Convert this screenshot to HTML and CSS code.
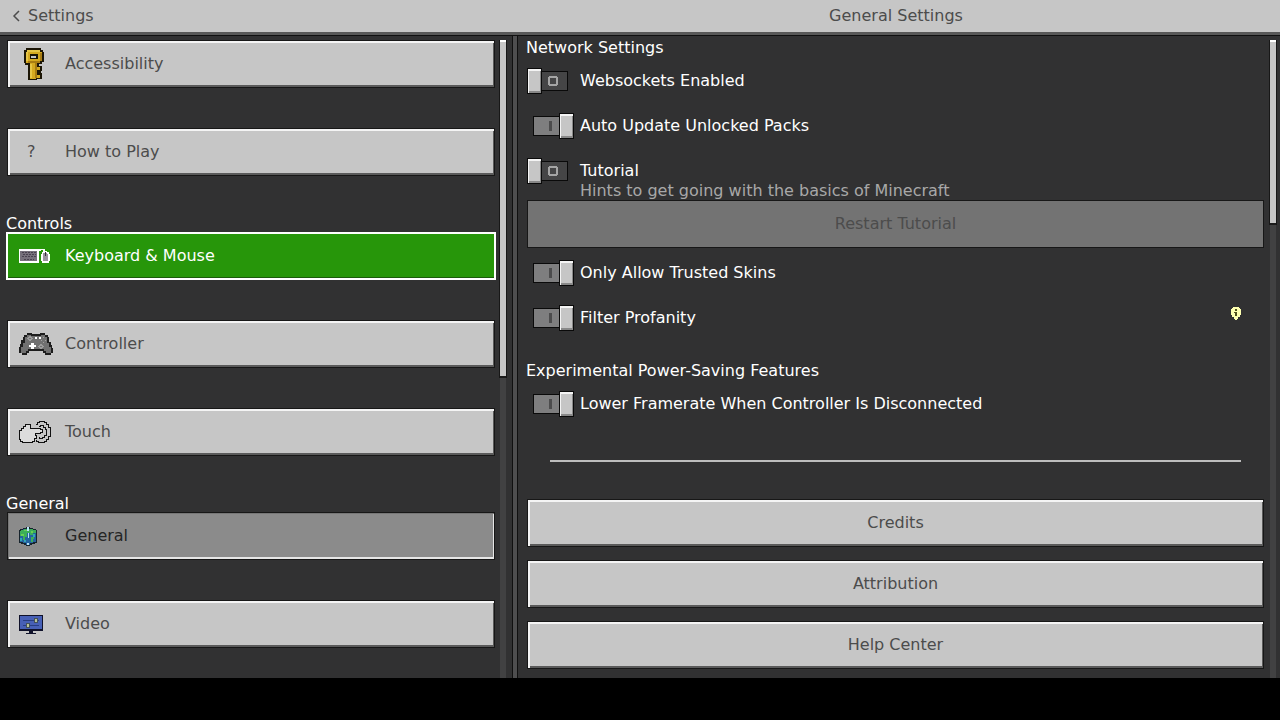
FILE: index.html
```html
<!DOCTYPE html>
<html lang="en">
<head>
    <meta charset="UTF-8">
    <meta name="viewport" content="width=device-width, initial-scale=1.0">
    <title>General Settings</title>
    <link rel="stylesheet" href="styles.css">
</head>
<body>
    <header class="topbar">
        <div class="back-area">
            <button type="button" class="back">
                <svg width="8" height="12" viewBox="0 0 8 12"><path d="M7 1L2 6L7 11" fill="none" stroke="#4c4c4c" stroke-width="1.5"/></svg>
                Settings
            </button>
        </div>
        <h1>General Settings</h1>
    </header>

    <main class="screen">
        <div class="sidebar">
            <nav class="menu">
                <button type="button" class="tile">
                    <svg class="icon" viewBox="0 0 36 32">
                        <path fill="#1c1606" d="M7 0h15v2h2v2h1v10h-2v2h-3v2h3v5h-1v2h1v6h-5v1h-9V17h-3v-2H5V2h2z"/>
                        <path fill="#d5a91f" d="M8 2h13v2h2v9h-2v2h-3v4h3v3h-3v5h3v3h-4v1h-6V15H7V4h1z"/>
                        <path fill="#e6c545" d="M8 2h13v2H9v9H7V4h1zM11 16h2v14h-2z"/>
                        <path fill="#a87c12" d="M21 5h2v8h-2v2H9v-2h12zM16 15h2v15h-2z"/>
                        <path fill="#1c1606" d="M11 6h8v5h-8z"/>
                        <path fill="#c6c6c6" d="M12 8h5v2h-5z"/>
                    </svg>
                    <span>Accessibility</span>
                </button>
                <button type="button" class="tile">
                    <span class="icon question">?</span>
                    <span>How to Play</span>
                </button>

                <section class="group">
                    <h2>Controls</h2>
                    <button type="button" class="tile active">
                        <svg class="icon" viewBox="0 0 36 32">
                            <path fill="#fff" d="M0 9h20v14H0z"/>
                            <path fill="#77717c" d="M1 11h17v10H1z"/>
                            <path stroke="#4a4350" stroke-dasharray="2 1" d="M3 12.500h14M4 14.500h13M3 16.500h14M5 19.500h10"/>
                            <path fill="none" stroke="#fff" stroke-width="1.500" d="M20 10.500h1v-1h4v3"/>
                            <path fill="#fff" d="M24 11h4v1h2v2h1v7h-1v2h-7v-2h-1v-7h1v-2h1z"/>
                            <path fill="#9a929f" d="M24 13h4v1h1v7h-5z"/>
                            <path fill="#38313d" d="M26 12h1v4h-1z"/>
                        </svg>
                        <span>Keyboard &amp; Mouse</span>
                    </button>
                    <button type="button" class="tile">
                        <svg class="icon" viewBox="0 0 36 32">
                            <path fill="#1d1d1d" d="M8 5h5v1h8V5h5v2h3v2h1v5h2v3h1v3h1v5h-2v2h-6v-2h-2v-2H10v2H8v2H3v-2H0v-6h1v-3h1v-4h2V9h1V7h3z"/>
                            <path fill="#707070" d="M8 7h4v1h10V7h4v2h2v6h2v4h2v6h-5v-2h-2v-2H9v2H7v2H2v-6h2v-4h2V9h2z"/>
                            <path fill="#fff" d="M12 15h3v2h2v2h-2v2h-3v-2h-2v-2h2zM16 9h2v2h-2zM20 9h2v2h-2z"/>
                            <path fill="none" stroke="#9c9c9c" d="M9 10.500l2-2 2 2-2 2zM20 18.500l2-2 2 2-2 2z"/>
                            <path fill="#a0a0a0" d="M24 9h1v1h-1zM22 12h1v1h-1zM26 12h1v1h-1zM24 14h1v1h-1z"/>
                        </svg>
                        <span>Controller</span>
                    </button>
                    <button type="button" class="tile">
                        <svg class="icon" viewBox="0 0 36 32">
                            <path fill="#dcdcdc" stroke="#111" d="M2.500 12.500h2v-2h2v-2h5v4h10v1h2v3h-2v1h-5v2h1v3h-2v3h-2v1h-10v-1h-2v-2h-1v-9h2z"/>
                            <path fill="none" stroke="#111" d="M16.500 8.500h2v-2h2v-1h5v1h2v2h2v3h2v9h-2v3h-2v2h-2v1h-6v-1h-2v-2M19.500 10.500h2v-1h3v2h2v2h1v6h-2v2h-2v1h-3v-2"/>
                        </svg>
                        <span>Touch</span>
                    </button>
                </section>

                <section class="group">
                    <h2>General</h2>
                    <button type="button" class="tile current">
                        <svg class="icon" viewBox="0 0 36 32">
                            <path fill="#17242d" d="M7 7h4v1h3v1h3v1h1v13h-2v1h-3v1h-2v1H7v-1H5v-1H2v-1H0V10h1V9h3V8h3z"/>
                            <path fill="#2463a0" d="M1 11h3V9h4V8h2v1h4v2h3v11h-3v1h-3v2H7v-2H4v-1H1z"/>
                            <path fill="#3cae58" d="M2 10h3V9h3v1h2V9h4v1h3v3h-3v2h-3v-2H8v4H6v3H4v-4H1v-5h1zM12 17h3v2h-1v3h-2z"/>
                            <path fill="#68cf55" d="M5 10h3v1H5zM2 14h3v2H2zM12 11h2v2h-2z"/>
                            <path fill="#33a8b4" d="M1 18h2v3H1zM5 20h2v2H5zM14 14h2v3h-2z"/>
                            <path fill="#b7e1f5" d="M8 7h2v4H8zM8 23h2v2H8zM9 13h1v5H9z"/>
                        </svg>
                        <span>General</span>
                    </button>
                    <button type="button" class="tile">
                        <svg class="icon" viewBox="0 0 36 32">
                            <path fill="#10122a" d="M0 7h24v16H14v2h3v1H7v-1h3v-2H0z"/>
                            <path fill="#4760b6" d="M1 8h22v13H1z"/>
                            <path fill="#283d83" d="M4 12h16v1H4zM4 17h16v1H4z"/>
                            <path fill="#44515b" d="M15 10h4v5h-4zM7 15h4v5H7z"/>
                            <path fill="#b7c39b" d="M16 11h2v3h-2zM8 16h2v3H8z"/>
                        </svg>
                        <span>Video</span>
                    </button>
                </section>
            </nav>
            <div class="scrollbar"><div class="thumb thumb-menu"></div></div>
        </div>

        <div class="content">
            <form class="options">
                <h2>Network Settings</h2>
                <div class="toggles">
                    <div class="option">
                        <input type="checkbox" id="websockets">
                        <label for="websockets">Websockets Enabled</label>
                    </div>
                    <div class="option">
                        <input type="checkbox" id="autoUpdate" checked>
                        <label for="autoUpdate">Auto Update Unlocked Packs</label>
                    </div>
                    <div class="option">
                        <input type="checkbox" id="tutorial" aria-describedby="tutorialHint">
                        <label for="tutorial">Tutorial</label>
                    </div>
                </div>
                <p class="hint" id="tutorialHint">Hints to get going with the basics of Minecraft</p>
                <button type="button" class="wide" disabled>Restart Tutorial</button>
                <div class="toggles">
                    <div class="option">
                        <input type="checkbox" id="trustedSkins" checked>
                        <label for="trustedSkins">Only Allow Trusted Skins</label>
                    </div>
                    <div class="option">
                        <input type="checkbox" id="profanity" checked>
                        <label for="profanity">Filter Profanity</label>
                        <svg class="info" viewBox="0 0 10 14">
                            <path fill="#fdffb0" d="M2 0h6v1h1v1h1v6H9v2H7v2H6v1H4v-1H3v-2H1V8H0V2h1V1h1z"/>
                            <path fill="#4d501c" d="M4 2h2v2H4zM3 5h3v4H4V6H3z"/>
                        </svg>
                    </div>
                </div>

                <h2 class="spaced">Experimental Power-Saving Features</h2>
                <div class="toggles">
                    <div class="option">
                        <input type="checkbox" id="framerate" checked>
                        <label for="framerate">Lower Framerate When Controller Is Disconnected</label>
                    </div>
                </div>
                <hr>
                <div class="links">
                    <button type="button" class="wide">Credits</button>
                    <button type="button" class="wide">Attribution</button>
                    <button type="button" class="wide">Help Center</button>
                </div>
            </form>
            <div class="scrollbar"><div class="thumb thumb-options"></div></div>
        </div>
    </main>
</body>
</html>
```
FILE: styles.css
```css
*, *::before, *::after {
    box-sizing: border-box;
}
body {
    display: flex;
    flex-direction: column;
    height: 100vh;
    margin: 0;
    padding-bottom: 42px;
    background: #000;
    color: #fff;
    font-family: "DejaVu Sans", sans-serif;
    font-size: 16px;
    line-height: 16px;
}
button {
    padding: 0;
    color: #4c4c4c;
    font: inherit;
    cursor: pointer;
}
h1, h2, p {
    margin: 0;
    font-size: 16px;
    font-weight: normal;
}
.topbar {
    display: flex;
    flex-shrink: 0;
    align-items: center;
    height: 36px;
    background: #c6c6c6;
    border-bottom: 1px solid #101010;
    box-shadow: inset 0 -3px #585858;
    color: #4c4c4c;
    padding-bottom: 3px;
}
.back-area {
    width: 40%;
    padding-left: 12px;
}
.back {
    display: flex;
    align-items: center;
    gap: 8px;
    background: none;
    border: none;
}
h1 {
    flex: 1;
    text-align: center;
}
.screen {
    display: flex;
    flex: 1;
    min-height: 0;
    background: #313132;
}
.sidebar {
    display: flex;
    width: 40%;
    padding-right: 6px;
}
.menu {
    display: flex;
    flex: 1;
    flex-direction: column;
    gap: 40px;
    padding: 4px 5px 0 7px;
    overflow: hidden;
}
.group {
    display: flex;
    flex-direction: column;
    gap: 40px;
}
.group h2 {
    margin: 0 -1px -40px;
}

/* Bevelled buttons */
.tile, .wide {
    flex-shrink: 0;
    height: 48px;
    background: #c6c6c6;
    border: 1px solid #171717;
    box-shadow: inset 2px 2px #f4f4f4, inset -1px -2px #5a5a5a;
}
.tile {
    display: flex;
    align-items: center;
    padding-left: 11px;
    text-align: left;
}
.tile.active {
    margin: 0 -1px;
    background: #27960a;
    border: 2px solid #fff;
    box-shadow: inset 0 -1px #1b5c0b;
    color: #fff;
}
.tile.current {
    background: #8b8b8b;
    box-shadow: inset 1px 1px #777, inset -1px -2px #e6e6e6;
    color: #252525;
}
.icon {
    flex-shrink: 0;
    width: 36px;
    height: 32px;
    margin-right: 10px;
    shape-rendering: crispEdges;
}
.question {
    padding: 8px;
}
.wide {
    width: 100%;
    text-align: center;
}
.wide:disabled {
    background: #737373;
    box-shadow: none;
    color: #4c4c4c;
    cursor: default;
}

.scrollbar {
    flex-shrink: 0;
    width: 6px;
    padding-top: 4px;
    background: linear-gradient(#313132 4px, #414142 4px);
}
.thumb {
    background: #c6c6c6;
    border-bottom: 2px solid #1b1b1b;
    box-shadow: 1px 0 #171717, -1px 0 #171717, inset 0 2px #fff;
}
.thumb-menu {
    height: 53%;
}
.thumb-options {
    height: 29%;
}

.content {
    display: flex;
    flex: 1;
    min-width: 0;
    padding-right: 4px;
    border-left: 1px solid #101010;
    box-shadow: inset 4px 0 #4e4e4f, inset 5px 0 #101010;
}
.options {
    display: flex;
    flex: 1;
    flex-direction: column;
    padding: 4px 6px 0 14px;
    overflow: hidden;
}
.options h2 {
    margin-left: -1px;
}
.options .spaced {
    margin-top: 33px;
}
.toggles {
    display: flex;
    flex-direction: column;
    gap: 21px;
    margin-top: 13px;
}
.option {
    display: flex;
    align-items: center;
    height: 24px;
}
.option label {
    padding-left: 6px;
}
.hint {
    padding-left: 53px;
    margin-bottom: 1px;
    color: #a8a8a8;
}
.info {
    width: 10px;
    height: 14px;
    margin: 0 23px 8px auto;
    shape-rendering: crispEdges;
}

/* The knob sits left when off and right when on */
input[type="checkbox"] {
    display: flex;
    flex-shrink: 0;
    align-items: center;
    appearance: none;
    width: 47px;
    height: 26px;
    margin: 0;
    cursor: pointer;
}
input[type="checkbox"]::before {
    content: "";
    width: 15px;
    height: 26px;
    background: #c6c6c6;
    border: 1px solid #0a0a0a;
    box-shadow: inset 1px 2px #f4f4f4, inset -1px -2px #888;
}
input[type="checkbox"]::after {
    content: "";
    width: 26px;
    height: 20px;
    border: 1px solid #0a0a0a;
    border-left: none;
    background:
        linear-gradient(#454546, #454546) 8px 6px / 6px 6px no-repeat,
        linear-gradient(#a5a5a5, #a5a5a5) 7px 5px / 8px 8px no-repeat,
        linear-gradient(#a5a5a5, #a5a5a5) 7px 4px / 8px 10px no-repeat,
        linear-gradient(#a5a5a5, #a5a5a5) 6px 5px / 10px 8px no-repeat,
        #454546;
}
input[type="checkbox"]:checked {
    flex-direction: row-reverse;
}
input[type="checkbox"]:checked::after {
    border-left: 1px solid #0a0a0a;
    border-right: none;
    background: linear-gradient(#4c4c4d, #4c4c4d) 15px 4px / 3px 10px no-repeat, #7e7e7f;
}

hr {
    width: calc(100% - 46px);
    height: 2px;
    margin: 44px auto 37px;
    background: #bdbdbd;
    border: none;
}
.links {
    display: flex;
    flex-direction: column;
    gap: 13px;
}
```
